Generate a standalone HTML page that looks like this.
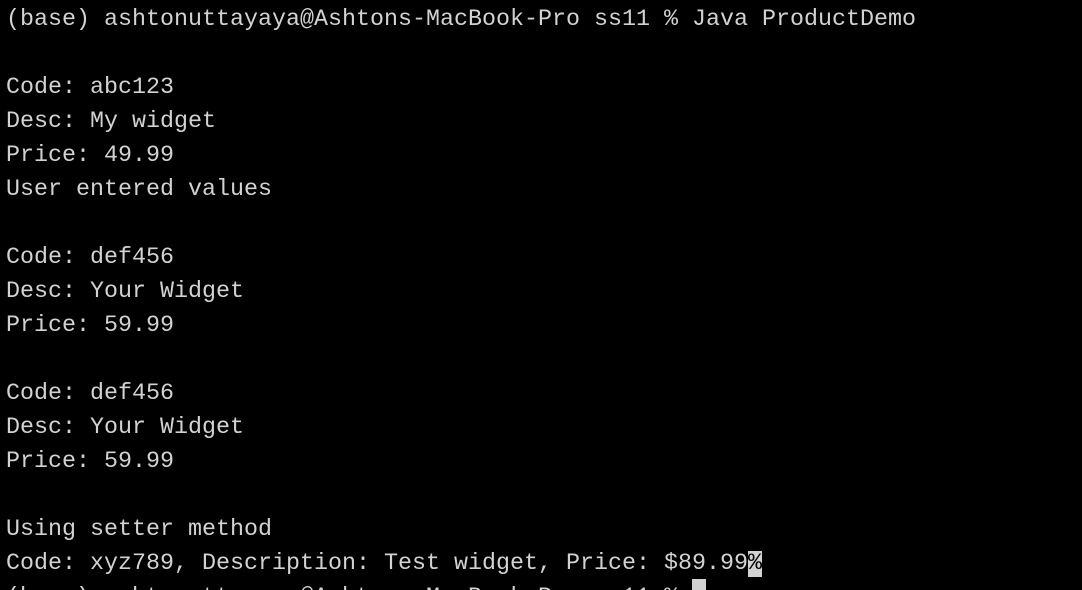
<!DOCTYPE html>
<html><head><style>
html,body{margin:0;padding:0;background:#000;width:1082px;height:590px;overflow:hidden}
pre{margin:0;padding:3px 0 0 6px;font-family:"Liberation Mono",monospace;font-size:23.33px;line-height:34px;color:#d2d2d2}
.inv{background:#d2d2d2;color:#000}
.cur{display:inline-block;width:14px;height:30px;background:#d2d2d2;vertical-align:top;margin-top:-2px}
</style></head><body><pre>(base) ashtonuttayaya@Ashtons-MacBook-Pro ss11 % Java ProductDemo

Code: abc123
Desc: My widget
Price: 49.99
User entered values

Code: def456
Desc: Your Widget
Price: 59.99

Code: def456
Desc: Your Widget
Price: 59.99

Using setter method
Code: xyz789, Description: Test widget, Price: $89.99<span class="inv">%</span>
(base) ashtonuttayaya@Ashtons-MacBook-Pro ss11 % <span class="cur"></span></pre></body></html>
